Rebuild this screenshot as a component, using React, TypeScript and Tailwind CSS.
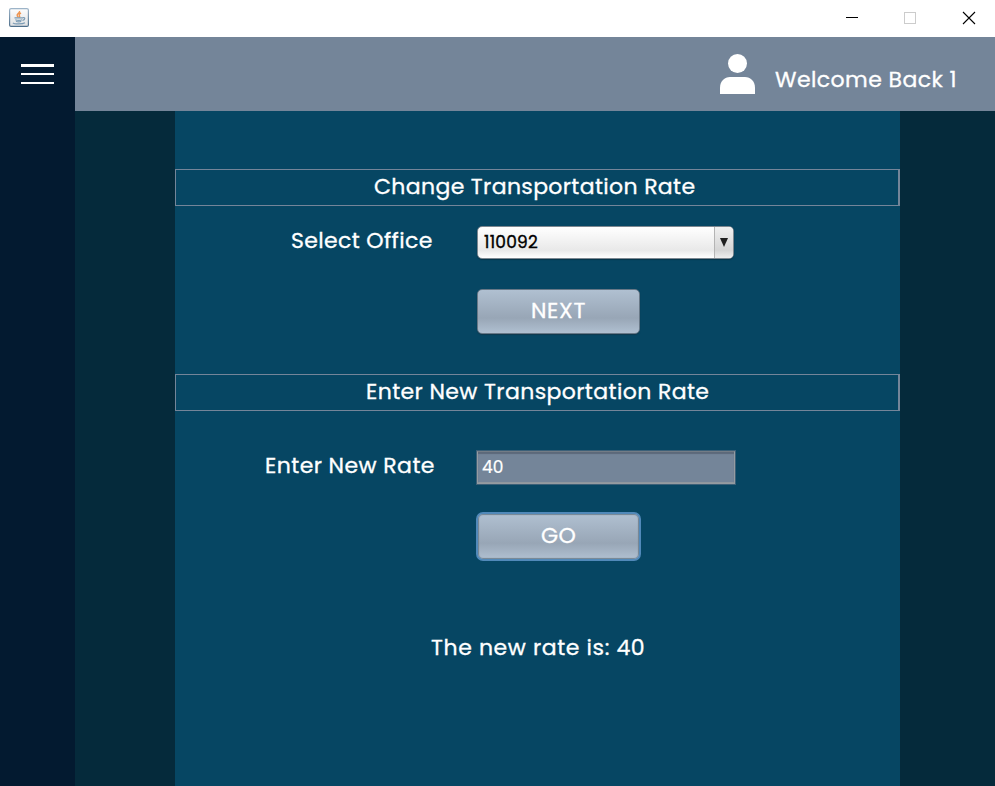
import React from "react";

const label =
  "whitespace-nowrap text-[22px] leading-[28px] font-normal text-white [-webkit-text-stroke:0.3px_white]";

function JavaIcon() {
  return (
    <svg width="20" height="20" viewBox="0 0 20 20">
      <defs>
        <linearGradient id="tile" x1="0" y1="0" x2="0" y2="1">
          <stop offset="0" stopColor="#fdfdfd" />
          <stop offset="1" stopColor="#dfe1e3" />
        </linearGradient>
        <linearGradient id="rim" x1="0" y1="0" x2="0" y2="1">
          <stop offset="0" stopColor="#9db4c8" />
          <stop offset="1" stopColor="#4f708c" />
        </linearGradient>
      </defs>
      <rect x="0.6" y="0.6" width="18.8" height="17.8" rx="1.5" fill="url(#tile)" stroke="url(#rim)" strokeWidth="1.2" />
      <path d="M10.5 3c.7 2-3 2.700-2.300 4.700.2.700 1 1.100 1.300 1.700M12 5c-2 1-2.200 1.800-1.500 2.800.4.700.2 1.200-.2 1.600" fill="none" stroke="#ee9450" strokeWidth="1.400" />
      <path d="M5.500 9.800h8.500M6.300 11.700c2 .7 5 .7 6.700 0M7 13.300c1.500.6 4 .6 5.200 0M14 9.700c2.500-.4 2.300 2-.5 2.700M4 14.800c1 1.500 9.500 1.500 12 0" fill="none" stroke="#7b9bb4" strokeWidth="1.200" />
    </svg>
  );
}

function TitleBar() {
  return (
    <div className="flex h-[37px] shrink-0 justify-between bg-white">
      <div className="pt-2 pl-[9px]">
        <JavaIcon />
      </div>
      <svg width="160" height="37" viewBox="0 0 160 37" fill="none" shapeRendering="crispEdges">
        <path d="M11 17.500h12" stroke="#000" />
        <rect x="69.500" y="12.500" width="11" height="11" stroke="#ccc" />
        <path d="M128 12l12 12M140 12l-12 12" stroke="#000" shapeRendering="auto" strokeWidth="1.100" />
      </svg>
    </div>
  );
}

function Sidebar() {
  return (
    <aside className="flex w-[75px] shrink-0 flex-col items-center bg-[#031a30] pt-[27px]">
      <div className="h-[3px] w-[33px] bg-white" />
      <div className="mt-[6px] h-[2px] w-[33px] bg-white" />
      <div className="mt-[7px] h-[2px] w-[33px] bg-white" />
    </aside>
  );
}

function Heading({ children, spacing }: { children: React.ReactNode; spacing: string }) {
  return (
    <div className="flex h-[37px] justify-start border border-r-2 border-[#748599] pt-[3px]">
      <h2 className={`${label} ${spacing}`}>{children}</h2>
    </div>
  );
}

function OfficeSelect() {
  return (
    <div className="flex h-[33px] w-[257px] overflow-hidden rounded-[5px] border border-[#7c8790] bg-linear-to-b from-white via-[#e9e9e9] via-75% to-white shadow-[0_1px_1px_#063349]">
      <span className="flex-1 pt-[3px] pl-[6px] text-[17px] leading-6 tracking-[0.2px] text-black [-webkit-text-stroke:0.35px_black]">110092</span>
      <span className="flex w-[19px] items-center justify-center border-l border-[#b4b4b4] bg-linear-to-b from-[#f0f0f0] via-[#d5d5d5] via-75% to-[#eeeeee]">
        <svg width="8" height="9" viewBox="0 0 8 9">
          <path d="M0 0h8L4 9z" fill="#202020" />
        </svg>
      </span>
    </div>
  );
}

export default function App() {
  return (
    <div className="flex h-[786px] w-[995px] flex-col overflow-hidden font-['Poppins','Inter',sans-serif]">
      <TitleBar />
      <div className="flex min-h-0 flex-1">
        <Sidebar />
        <div className="flex flex-1 flex-col">
          <header className="flex h-[74px] shrink-0 bg-[#748599] pl-[645px]">
            <svg className="mt-[17px] shrink-0" width="35" height="40" viewBox="0 0 35 40" fill="#fff">
              <circle cx="17.500" cy="9.500" r="9.500" />
              <path d="M0 40v-6C0 27 4.500 23 10 23h15c5.500 0 10 4 10 11v6z" />
            </svg>
            <span className={`${label} mt-[29px] ml-[20px] tracking-[0.42px]`}>Welcome Back 1</span>
          </header>
          <div className="flex flex-1 bg-[#052a3b] pl-[100px]">
            <main className="w-[725px] shrink-0 bg-[#064663] pt-[58px]">
              <Heading spacing="ml-[198px] tracking-[0.35px]">Change Transportation Rate</Heading>
              <div className="flex h-[83px] pt-[20px]">
                <span className={`${label} w-[302px] pt-px pl-[116px] tracking-[0.36px]`}>Select Office</span>
                <OfficeSelect />
              </div>
              <div className="h-[85px] pl-[302px]">
                <button className="block h-[45px] w-[163px] rounded-[5px] border border-[#687887] bg-linear-to-b from-[#b0c0d1] via-[#98a6b6] via-65% to-[#b0c0d1] pb-[2px] shadow-[0_1px_1px_#12394e]">
                  <span className={`${label} tracking-[0.7px]`}>NEXT</span>
                </button>
              </div>
              <Heading spacing="ml-[190px] tracking-[0.39px]">Enter New Transportation Rate</Heading>
              <div className="flex h-[101px] pt-[40px]">
                <span className={`${label} w-[302px] pt-px pl-[90px] tracking-[0.42px]`}>Enter New Rate</span>
                <div className="h-[33px] w-[258px] border border-[#949ba1] border-t-[#737c86] bg-[#748599] pt-[3px] pl-[4px] text-[17px] leading-6 text-white shadow-[0_0_0_1px_#3c6078,inset_0_2px_1px_#5c697a,inset_0_-1px_0_#8f979e] [-webkit-text-stroke:0.2px_white]">40</div>
              </div>
              <div className="h-[121px] pl-[301px]">
                <button className="block h-[49px] w-[165px] rounded-[7px] border-2 border-[#5189b9] bg-linear-to-b from-[#b0c0d1] via-[#98a6b6] via-65% to-[#b0c0d1] pb-[2px] shadow-[inset_0_0_1px_1px_#748391]">
                  <span className={`${label} tracking-[0.2px]`}>GO</span>
                </button>
              </div>
              <p className={`${label} pt-px pl-[256px] tracking-[0.6px]`}>The new rate is: 40</p>
            </main>
          </div>
        </div>
      </div>
    </div>
  );
}
